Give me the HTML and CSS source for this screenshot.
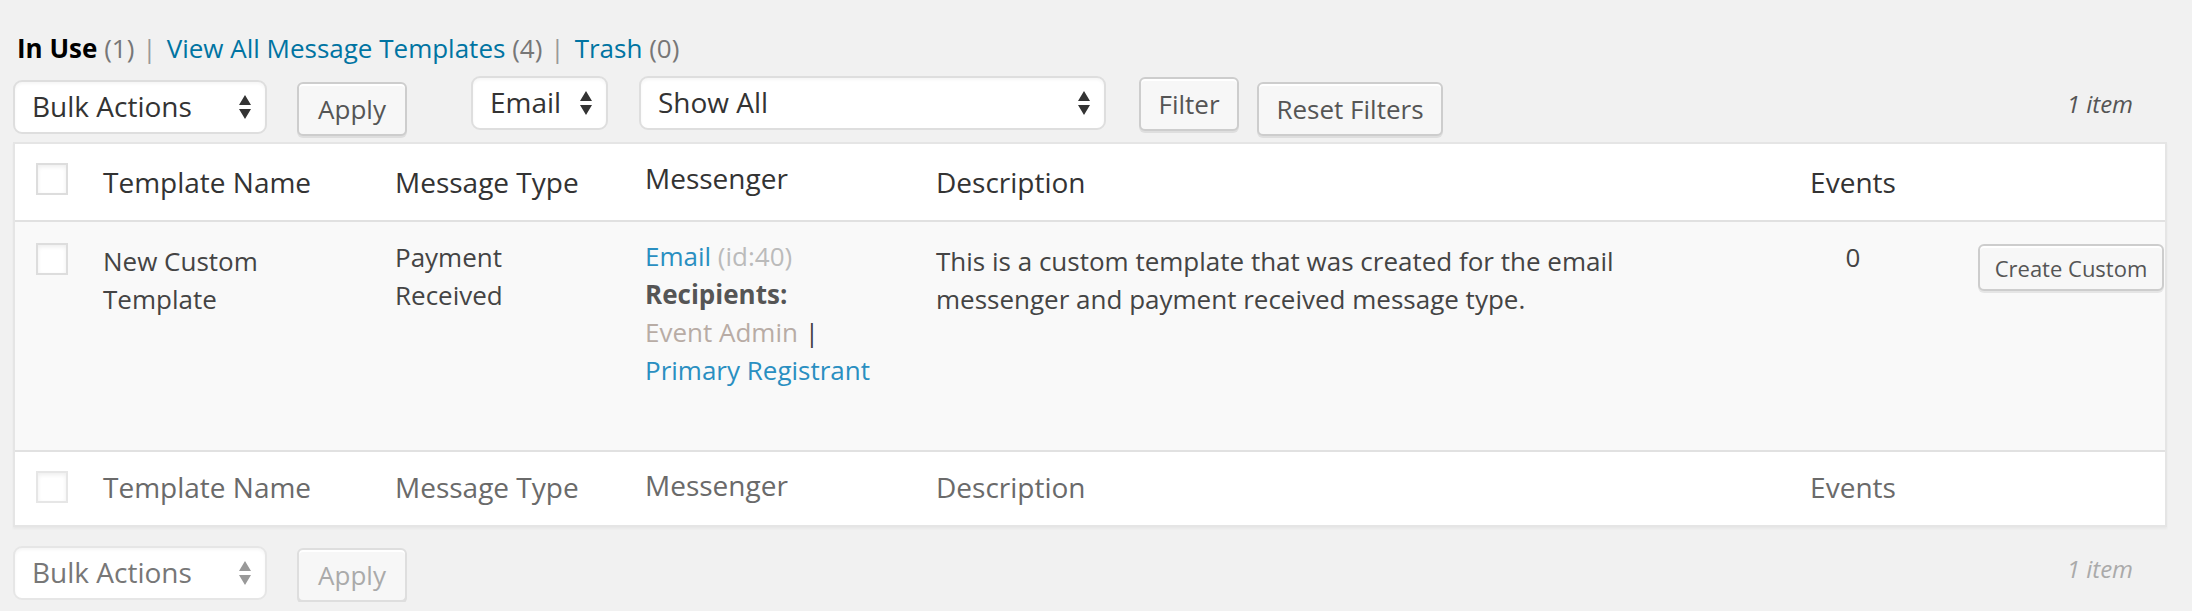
FILE: index.html
```html
<!DOCTYPE html>
<html lang="en">
<head>
<meta charset="utf-8">
<title>Message Templates</title>
<link rel="stylesheet" href="styles.css">
</head>
<body>
<div class="wrap">
  <ul class="subsubsub">
    <li class="current">In Use <span class="count">(1)</span></li>
    <li class="sep">|</li>
    <li><a href="#">View All Message Templates</a> <span class="count">(4)</span></li>
    <li class="sep">|</li>
    <li><a href="#">Trash</a> <span class="count">(0)</span></li>
  </ul>

  <div class="tablenav top">
    <div class="select bulk"><span>Bulk Actions</span><svg class="arrows" width="12" height="24" viewBox="0 0 12 24"><path d="M0 10 6 0 12 10Z M0 14 12 14 6 24Z"/></svg></div>
    <button class="button apply">Apply</button>
    <div class="select email"><span>Email</span><svg class="arrows" width="12" height="24" viewBox="0 0 12 24"><path d="M0 10 6 0 12 10Z M0 14 12 14 6 24Z"/></svg></div>
    <div class="select showall"><span>Show All</span><svg class="arrows" width="12" height="24" viewBox="0 0 12 24"><path d="M0 10 6 0 12 10Z M0 14 12 14 6 24Z"/></svg></div>
    <button class="button filter">Filter</button>
    <button class="button reset">Reset Filters</button>
    <span class="displaying-num">1 item</span>
  </div>

  <div class="list-table">
    <div class="row head">
      <div class="cb"><span class="checkbox"></span></div>
      <div class="cell">Template Name</div>
      <div class="cell">Message Type</div>
      <div class="cell messenger">Messenger</div>
      <div class="cell">Description</div>
      <div class="cell events">Events</div>
      <div class="cell action"></div>
    </div>
    <div class="row item">
      <div class="cb"><span class="checkbox"></span></div>
      <div class="cell name">New Custom Template</div>
      <div class="cell type">Payment Received</div>
      <div class="cell messenger">
        <div><a class="link" href="#">Email</a> <span class="id">(id:40)</span></div>
        <div class="recip">Recipients:</div>
        <div><span class="muted">Event Admin</span> |</div>
        <div><a class="link" href="#">Primary Registrant</a></div>
      </div>
      <div class="cell desc">This is a custom template that was created for the email messenger and payment received message type.</div>
      <div class="cell events">0</div>
      <div class="cell action"><button class="button small">Create Custom</button></div>
    </div>
    <div class="row foot">
      <div class="cb"><span class="checkbox"></span></div>
      <div class="cell">Template Name</div>
      <div class="cell">Message Type</div>
      <div class="cell messenger">Messenger</div>
      <div class="cell">Description</div>
      <div class="cell events">Events</div>
      <div class="cell action"></div>
    </div>
  </div>

  <div class="tablenav bottom">
    <div class="select bulk"><span>Bulk Actions</span><svg class="arrows" width="12" height="24" viewBox="0 0 12 24"><path d="M0 10 6 0 12 10Z M0 14 12 14 6 24Z"/></svg></div>
    <button class="button apply">Apply</button>
    <span class="displaying-num">1 item</span>
  </div>
</div>
</body>
</html>
```

FILE: styles.css
```css
html, body {
  margin: 0;
  padding: 0;
  background: #f1f1f1;
}

body {
  font-family: "Open Sans", "DejaVu Sans", sans-serif;
  color: #444;
}

.wrap {
  padding: 0 25px 0 13px;
}

/* status links */
.subsubsub {
  list-style: none;
  margin: 0;
  padding: 29px 0 0 4px;
  height: 38px;
  display: flex;
  font-size: 26px;
  line-height: 38px;
}

.subsubsub .current {
  font-weight: 700;
  color: #000;
}

.subsubsub .current .count {
  font-weight: 400;
}

.subsubsub a {
  color: #0074a2;
  text-decoration: none;
}

.subsubsub .count {
  color: #777;
}

.subsubsub .sep {
  color: #999;
  margin: 0 10px 0 8px;
}

/* navigation bars */
.tablenav {
  display: flex;
  align-items: flex-start;
}

.tablenav.top {
  height: 75px;
}

.tablenav.bottom {
  margin-top: 19px;
}

.select {
  box-sizing: border-box;
  height: 54px;
  display: flex;
  align-items: center;
  justify-content: space-between;
  padding: 0 14px 3px 17px;
  background: #fff;
  border: 2px solid #dedede;
  border-radius: 9px;
  box-shadow: inset 0 2px 3px rgba(0, 0, 0, 0.04);
  font-size: 28px;
  color: #333;
}

.select .arrows {
  fill: #333;
  margin-top: 3px;
  flex: none;
}

.select.bulk { width: 254px; }
.select.email { width: 137px; }
.select.showall { width: 467px; }

.button {
  box-sizing: border-box;
  height: 54px;
  padding: 0;
  font-family: "Open Sans", "DejaVu Sans", sans-serif;
  font-size: 26px;
  color: #555;
  background: #f7f7f7;
  border: 2px solid #cdcdcd;
  border-radius: 6px;
  box-shadow: inset 0 2px 0 #fff, 0 2px 0 rgba(0, 0, 0, 0.08);
  text-align: center;
}

.button.apply { width: 110px; }
.button.filter { width: 100px; }
.button.reset { width: 186px; }

.top .bulk { margin-top: 13px; }
.top .apply { margin: 15px 0 0 30px; }
.top .email { margin: 9px 0 0 64px; }
.top .showall { margin: 9px 0 0 31px; }
.top .filter { margin: 10px 0 0 33px; }
.top .reset { margin: 15px 0 0 18px; }

.bottom .apply { margin: 2px 0 0 30px; }

.displaying-num {
  margin-left: auto;
  margin-right: 34px;
  font-size: 24px;
  line-height: 34px;
  font-style: italic;
  color: #555;
}

.top .displaying-num { margin-top: 20px; }
.bottom .displaying-num { margin-top: 6px; color: #aaa; }

.bottom .select { color: #777; border-color: #e6e6e6; }
.bottom .select .arrows { fill: #999; }
.bottom .button { color: #aaa; border-color: #dedede; }

/* list table */
.list-table {
  box-sizing: border-box;
  width: 2154px;
  background: #fff;
  border: 2px solid #e5e5e5;
  box-shadow: 0 2px 2px rgba(0, 0, 0, 0.04);
}

.row {
  display: grid;
  grid-template-columns: 68px 292px 250px 291px 824px 226px 199px;
}

.cell {
  padding: 0 20px;
}

.cb {
  padding: 19px 0 0 21px;
}

.checkbox {
  display: block;
  box-sizing: border-box;
  width: 32px;
  height: 32px;
  background: #fff;
  border: 2px solid #dddddd;
  box-shadow: inset 0 2px 4px rgba(0, 0, 0, 0.07);
}

.head {
  height: 76px;
  border-bottom: 2px solid #e1e1e1;
}

.head .cell,
.foot .cell {
  font-size: 28px;
  line-height: 39px;
  color: #333;
}

.head .cell { padding-top: 19px; }
.head .cell.messenger { padding-top: 15px; }

.foot {
  height: 73px;
  border-top: 2px solid #e1e1e1;
}

.foot .cell {
  padding-top: 16px;
  color: #6a6a6a;
}

.foot .cell.messenger { padding-top: 14px; }
.foot .checkbox { border-color: #e6e6e6; }

.cell.events {
  text-align: center;
}

.item {
  height: 228px;
  background: #f9f9f9;
}

.item .cb { padding-top: 21px; }

.item .cell {
  font-size: 26px;
  line-height: 38px;
  color: #444;
  padding-top: 20px;
}

.item .cell.type,
.item .cell.events { padding-top: 16px; }

.item .cell.messenger { padding-top: 15px; }

.item .cell.action {
  padding: 22px 2px 0 12px;
}

.link {
  color: #2a8fc1;
  text-decoration: none;
}

.id {
  color: #bbb;
}

.recip {
  font-weight: 700;
  color: #555;
}

.muted {
  color: #b8aca5;
}

.button.small {
  width: 186px;
  height: 47px;
  font-size: 22px;
  color: #555;
}
```
